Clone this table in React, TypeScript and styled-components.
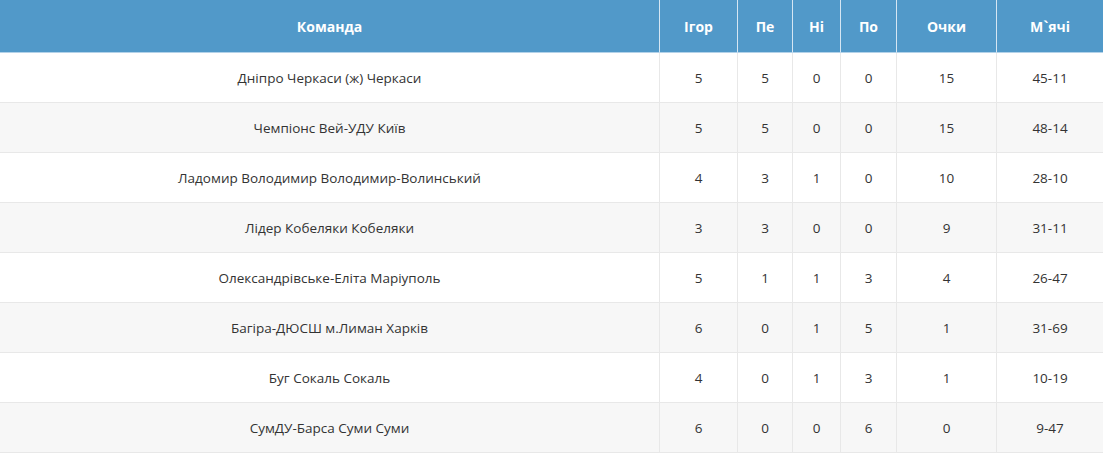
import React from 'react';
import styled, { createGlobalStyle } from 'styled-components';

const GlobalStyle = createGlobalStyle`
  html, body {
    margin: 0;
    padding: 0;
    background: #ffffff;
  }
  body {
    font-family: 'Open Sans', 'Liberation Sans', sans-serif;
  }
`;

const Table = styled.table`
  width: 1103px;
  table-layout: fixed;
  border-collapse: separate;
  border-spacing: 0;
  font-size: 13.5px;
  color: #333333;
`;

const HeadCell = styled.th<{ w?: number }>`
  box-sizing: border-box;
  width: ${(p) => (p.w ? `${p.w}px` : 'auto')};
  height: 53px;
  padding: 0;
  background: #5199c9;
  color: #ffffff;
  font-size: 14px;
  font-weight: 700;
  text-align: center;
  border-bottom: 1px solid #b3d2e9;
  border-right: 1px solid #d5e6f3;

  &:last-child {
    border-right: none;
  }
`;

const Row = styled.tr<{ striped: boolean }>`
  background: ${(p) => (p.striped ? '#f7f7f7' : '#ffffff')};
`;

const Cell = styled.td`
  box-sizing: border-box;
  height: 50px;
  padding: 0;
  text-align: center;
  border-bottom: 1px solid #e8e8e8;
  border-right: 1px solid #e8e8e8;

  &:last-child {
    border-right: none;
  }
`;

const columns = [
  { title: 'Команда', w: 660 },
  { title: 'Ігор', w: 78 },
  { title: 'Пе', w: 55 },
  { title: 'Ні', w: 48 },
  { title: 'По', w: 56 },
  { title: 'Очки', w: 100 },
  { title: 'М`ячі', w: 106 },
];

const rows = [
  ['Дніпро Черкаси (ж) Черкаси', '5', '5', '0', '0', '15', '45-11'],
  ['Чемпіонс Вей-УДУ Київ', '5', '5', '0', '0', '15', '48-14'],
  ['Ладомир Володимир Володимир-Волинський', '4', '3', '1', '0', '10', '28-10'],
  ['Лідер Кобеляки Кобеляки', '3', '3', '0', '0', '9', '31-11'],
  ['Олександрівське-Еліта Маріуполь', '5', '1', '1', '3', '4', '26-47'],
  ['Багіра-ДЮСШ м.Лиман Харків', '6', '0', '1', '5', '1', '31-69'],
  ['Буг Сокаль Сокаль', '4', '0', '1', '3', '1', '10-19'],
  ['СумДУ-Барса Суми Суми', '6', '0', '0', '6', '0', '9-47'],
];

const App: React.FC = () => {
  return (
    <>
      <GlobalStyle />
      <Table>
        <thead>
          <tr>
            {columns.map((col) => (
              <HeadCell key={col.title} w={col.w}>
                {col.title}
              </HeadCell>
            ))}
          </tr>
        </thead>
        <tbody>
          {rows.map((row, index) => (
            <Row key={index} striped={index % 2 === 1}>
              {row.map((value, i) => (
                <Cell key={i}>{value}</Cell>
              ))}
            </Row>
          ))}
        </tbody>
      </Table>
    </>
  );
};

export default App;
